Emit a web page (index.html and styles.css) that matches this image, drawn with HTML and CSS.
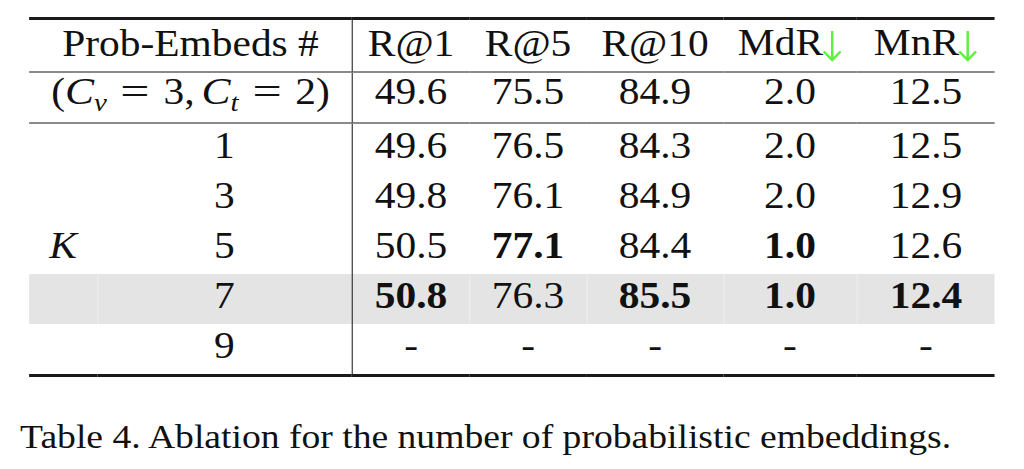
FILE: index.html
```html
<!DOCTYPE html>
<html lang="en">
<head>
<meta charset="utf-8">
<title>Table 4</title>
<link rel="stylesheet" href="styles.css">
</head>
<body>
<div class="sheet">
  <table class="tbl">
    <colgroup>
      <col class="c-k"><col class="c-n"><col class="c-r1"><col class="c-r5"><col class="c-r10"><col class="c-md"><col class="c-mn">
    </colgroup>
    <thead>
      <tr class="hdr">
        <th colspan="2">Prob-Embeds #</th>
        <th class="vl">R@1</th>
        <th>R@5</th>
        <th>R@10</th>
        <th>MdR<svg class="arrow" viewBox="0 0 18 32" width="18" height="32"><path d="M9 1V30M1.5 21.5L9 30L16.5 21.5"/></svg></th>
        <th>MnR<svg class="arrow" viewBox="0 0 18 32" width="18" height="32"><path d="M9 1V30M1.5 21.5L9 30L16.5 21.5"/></svg></th>
      </tr>
    </thead>
    <tbody>
      <tr class="base">
        <td colspan="2" class="math">(<i>C</i><sub>v</sub><span class="rel">=</span>3,<span class="sp"></span><i>C</i><sub>t</sub><span class="rel">=</span>2)</td>
        <td class="vl">49.6</td><td>75.5</td><td>84.9</td><td>2.0</td><td>12.5</td>
      </tr>
      <tr class="row">
        <td></td><td>1</td>
        <td class="vl">49.6</td><td>76.5</td><td>84.3</td><td>2.0</td><td>12.5</td>
      </tr>
      <tr class="row">
        <td></td><td>3</td>
        <td class="vl">49.8</td><td>76.1</td><td>84.9</td><td>2.0</td><td>12.9</td>
      </tr>
      <tr class="row">
        <td class="kvar"><i>K</i></td><td>5</td>
        <td class="vl">50.5</td><td><b>77.1</b></td><td>84.4</td><td><b>1.0</b></td><td>12.6</td>
      </tr>
      <tr class="row hl">
        <td></td><td>7</td>
        <td class="vl"><b>50.8</b></td><td>76.3</td><td><b>85.5</b></td><td><b>1.0</b></td><td><b>12.4</b></td>
      </tr>
      <tr class="row last">
        <td></td><td>9</td>
        <td class="vl">-</td><td>-</td><td>-</td><td>-</td><td>-</td>
      </tr>
    </tbody>
  </table>
  <p class="caption">Table 4. Ablation for the number of probabilistic embeddings.</p>
</div>
</body>
</html>
```

FILE: styles.css
```css
html, body {
  margin: 0;
  padding: 0;
  background: #ffffff;
  overflow: hidden;
}

.sheet {
  width: 880px;
  padding-top: 17px;
  padding-left: 25.9px;
  transform: scaleX(1.12);
  transform-origin: 0 0;
  font-family: "Liberation Serif", "Times New Roman", serif;
  color: #111111;
}

.tbl {
  border-collapse: separate;
  border-spacing: 0;
  table-layout: fixed;
  width: 862.5px;
  font-size: 37px;
}

.c-k { width: 60.7px; }
.c-n { width: 227.7px; }
.c-r1 { width: 104.5px; }
.c-r5 { width: 105.4px; }
.c-r10 { width: 121.4px; }
.c-md { width: 119.6px; }
.c-mn { width: 123.2px; }

.tbl th,
.tbl td {
  padding: 0;
  text-align: center;
  line-height: 37px;
  font-weight: 400;
  white-space: nowrap;
}

.tbl b {
  font-weight: 700;
}

.tbl .vl {
  border-left: 1px solid #2a2a2a;
}

.hdr th {
  border-top: 3px solid #1a1a1a;
  border-bottom: 2px solid #8a8a8a;
  padding-top: 4px;
  padding-bottom: 9px;
}

.base td {
  border-bottom: 2px solid #8a8a8a;
  padding-top: 0;
  padding-bottom: 12px;
}

.row td {
  padding-top: 3px;
  padding-bottom: 10px;
}

.row.last td {
  border-bottom: 3px solid #1a1a1a;
}

.hl td {
  background: #e4e4e4;
}

.hl td + td {
  box-shadow: inset 1px 0 0 #ececec;
}

.hl td.vl {
  box-shadow: none;
}

.arrow {
  vertical-align: -7px;
  margin-left: -1px;
  fill: none;
  stroke: #5af23a;
  stroke-width: 2.2;
  stroke-linecap: butt;
  stroke-linejoin: miter;
}

.math {
  height: 37px;
}

.math i {
  font-style: italic;
  font-size: 1.05em;
  line-height: 0;
}

.math sub {
  font-style: italic;
  font-size: 0.7em;
  line-height: 0;
  vertical-align: -0.26em;
}

.math .rel {
  display: inline-block;
  line-height: 0;
  margin: 0 0.4em;
  transform: scaleX(1.25);
}

.math .sp {
  display: inline-block;
  width: 0.17em;
}

.kvar i {
  font-style: italic;
}

.caption {
  margin: 41px 0 0 -8px;
  font-size: 33.6px;
  line-height: 38px;
  color: #111111;
}
```
